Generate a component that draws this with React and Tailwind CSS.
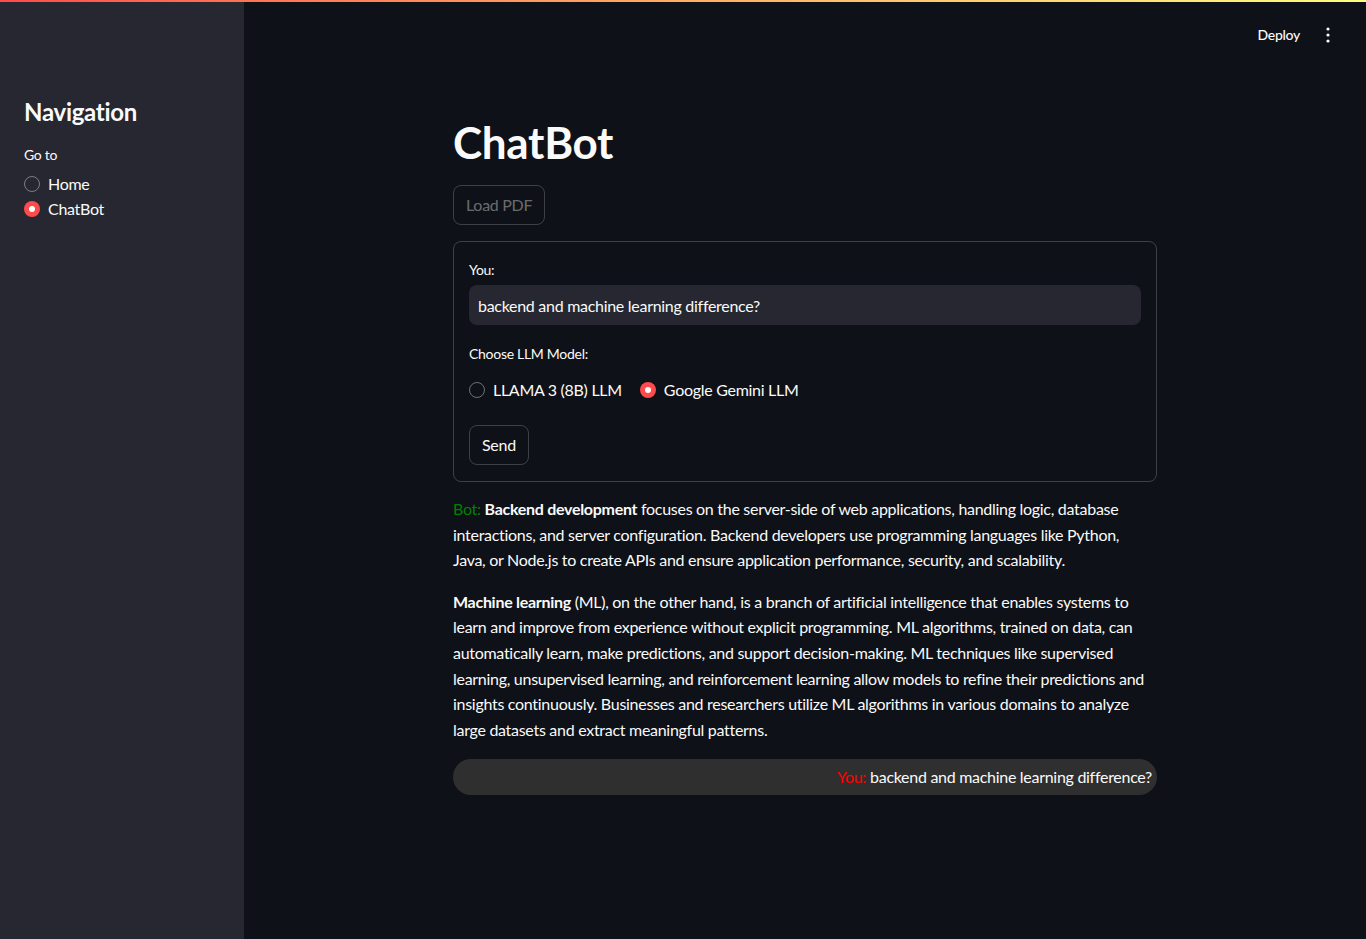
import { useState } from "react";

const font = { fontFamily: "Lato, 'Noto Sans', sans-serif", letterSpacing: "-0.018em" };

function Radio({ checked, label, onClick }) {
  return (
    <label onClick={onClick} className="flex items-center gap-2 h-6 cursor-pointer">
      {checked ? (
        <span className="w-4 h-4 rounded-full bg-[#ff4b4b] flex items-center justify-center">
          <span className="w-1.5 h-1.5 rounded-full bg-white" />
        </span>
      ) : (
        <span className="w-4 h-4 rounded-full border border-[rgba(250,250,250,0.4)]" />
      )}
      <span className="text-base">{label}</span>
    </label>
  );
}

export default function App() {
  const [page, setPage] = useState("ChatBot");
  const [model, setModel] = useState("gemini");
  const [text, setText] = useState("backend and machine learning difference?");

  return (
    <div style={font} className="min-h-screen flex flex-col bg-[#0e1117] text-[#fafafa]">
      <div className="h-[2px] bg-gradient-to-r from-[#ff4b4b] to-[#fffd80]" />
      <div className="flex flex-1">
        <aside className="w-[244px] shrink-0 bg-[#262730] px-6 pt-[93px]">
          <h2 className="text-2xl font-bold leading-[34px]">Navigation</h2>
          <p className="text-sm mt-[16px] mb-[7px]">Go to</p>
          <div className="flex flex-col gap-[1px]">
            <Radio checked={page === "Home"} label="Home" onClick={() => setPage("Home")} />
            <Radio checked={page === "ChatBot"} label="ChatBot" onClick={() => setPage("ChatBot")} />
          </div>
        </aside>

        <main className="flex-1 flex flex-col">
          <header className="h-[66px] flex items-center justify-end pr-[36px] gap-[26px]">
            <button className="text-sm font-medium">Deploy</button>
            <svg width="4" height="16" viewBox="0 0 4 16" fill="#fafafa">
              <circle cx="2" cy="2" r="1.6" />
              <circle cx="2" cy="8" r="1.6" />
              <circle cx="2" cy="14" r="1.6" />
            </svg>
          </header>

          <div className="w-[704px] ml-[209px] pt-[48px]">
            <h1 className="text-[44px] font-bold leading-[52px]">ChatBot</h1>
            <button className="mt-[17px] h-10 px-3 rounded-lg border border-[rgba(250,250,250,0.2)] text-base text-[rgba(250,250,250,0.4)]">
              Load PDF
            </button>

            <div className="mt-4 border border-[rgba(250,250,250,0.2)] rounded-lg px-[15px] pt-[18px] pb-4">
              <label className="block text-sm mb-[5px]">You:</label>
              <input
                value={text}
                onChange={(e) => setText(e.target.value)}
                className="w-full h-10 rounded-lg bg-[#262730] px-[9px] text-base outline-none"
              />
              <p className="text-sm mt-[19px] mb-[14px]">Choose LLM Model:</p>
              <div className="flex gap-[18px]">
                <Radio checked={model === "llama"} label="LLAMA 3 (8B) LLM" onClick={() => setModel("llama")} />
                <Radio checked={model === "gemini"} label="Google Gemini LLM" onClick={() => setModel("gemini")} />
              </div>
              <button className="mt-[23px] h-10 px-3 rounded-lg border border-[rgba(250,250,250,0.2)] text-base">
                Send
              </button>
            </div>

            <div className="mt-[14px] text-base leading-[25.6px]">
              <p className="mb-4 pr-2">
                <span className="text-[#008000]">Bot: </span>
                <strong className="font-bold">Backend development</strong> focuses on the server-side of web
                applications, handling logic, database interactions, and server configuration. Backend developers use
                programming languages like Python, Java, or Node.js to create APIs and ensure application performance,
                security, and scalability.
              </p>
              <p>
                <strong className="font-bold">Machine learning</strong> (ML), on the other hand, is a branch of
                artificial intelligence that enables systems to learn and improve from experience without explicit
                programming. ML algorithms, trained on data, can automatically learn, make predictions, and support
                decision-making. ML techniques like supervised learning, unsupervised learning, and reinforcement
                learning allow models to refine their predictions and insights continuously. Businesses and researchers
                utilize ML algorithms in various domains to analyze large datasets and extract meaningful patterns.
              </p>
            </div>

            <div className="mt-[17px] h-9 rounded-full bg-[#2f2f2f] flex items-center justify-end pr-[5px] text-base">
              <span className="text-[#ff0000] mr-1">You:</span>
              <span>backend and machine learning difference?</span>
            </div>
          </div>
        </main>
      </div>
    </div>
  );
}
